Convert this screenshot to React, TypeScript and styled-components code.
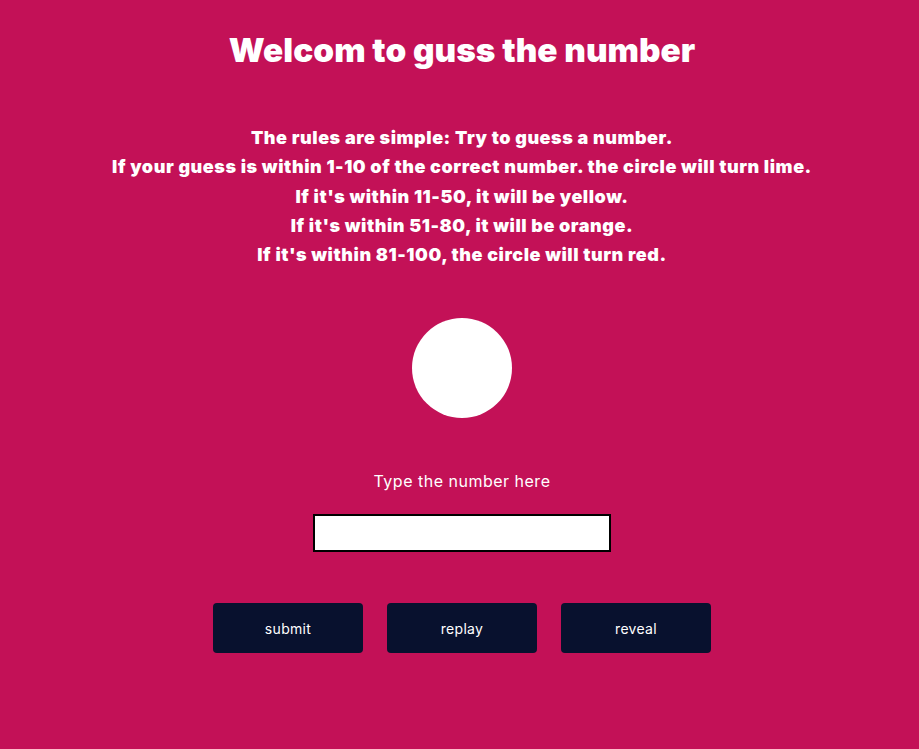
import React from "react";
import styled, { createGlobalStyle } from "styled-components";

const Global = createGlobalStyle`
  html, body { margin: 0; padding: 0; background: #c31157; }
  body { font-family: Inter, "Liberation Sans", sans-serif; }
`;

const Page = styled.main`
  min-height: 749px;
  box-sizing: border-box;
  padding: 30px 0 0 5px;
  display: flex;
  flex-direction: column;
  align-items: center;
  color: #fff;
`;

const Title = styled.h1`
  margin: 0;
  font-size: 33.3px;
  font-weight: 900;
  line-height: 40px;
  letter-spacing: 0.05px;
`;

const Rules = styled.div`
  margin-top: 53px;
  text-align: center;
  font-size: 18px;
  font-weight: 900;
  line-height: 29.3px;
  letter-spacing: 0.55px;
`;

const Circle = styled.div`
  margin-top: 49px;
  width: 100px;
  height: 100px;
  border-radius: 50%;
  background: #fff;
`;

const Label = styled.label`
  margin-top: 52px;
  font-size: 16px;
  font-weight: 400;
  line-height: 22px;
  letter-spacing: 0.5px;
`;

const Input = styled.input`
  margin-top: 22px;
  width: 298px;
  height: 38px;
  box-sizing: border-box;
  border: 2px solid #000;
  background: #fff;
  outline: none;
`;

const Buttons = styled.div`
  margin-top: 51px;
  display: flex;
  gap: 24px;
`;

const Button = styled.button`
  width: 150px;
  height: 50px;
  border: none;
  border-radius: 4px;
  background: #08112e;
  color: #fff;
  font-family: Inter, "Liberation Sans", sans-serif;
  font-size: 14px;
  letter-spacing: 0.3px;
  cursor: pointer;
`;

export default function App() {
  return (
    <>
      <Global />
      <Page>
        <Title>Welcom to guss the number</Title>
        <Rules>
          The rules are simple: Try to guess a number.
          <br />
          If your guess is within 1-10 of the correct number. the circle will turn lime.
          <br />
          If it's within 11-50, it will be yellow.
          <br />
          If it's within 51-80, it will be orange.
          <br />
          If it's within 81-100, the circle will turn red.
        </Rules>
        <Circle />
        <Label htmlFor="guess">Type the number here</Label>
        <Input id="guess" type="text" />
        <Buttons>
          <Button>submit</Button>
          <Button>replay</Button>
          <Button>reveal</Button>
        </Buttons>
      </Page>
    </>
  );
}
